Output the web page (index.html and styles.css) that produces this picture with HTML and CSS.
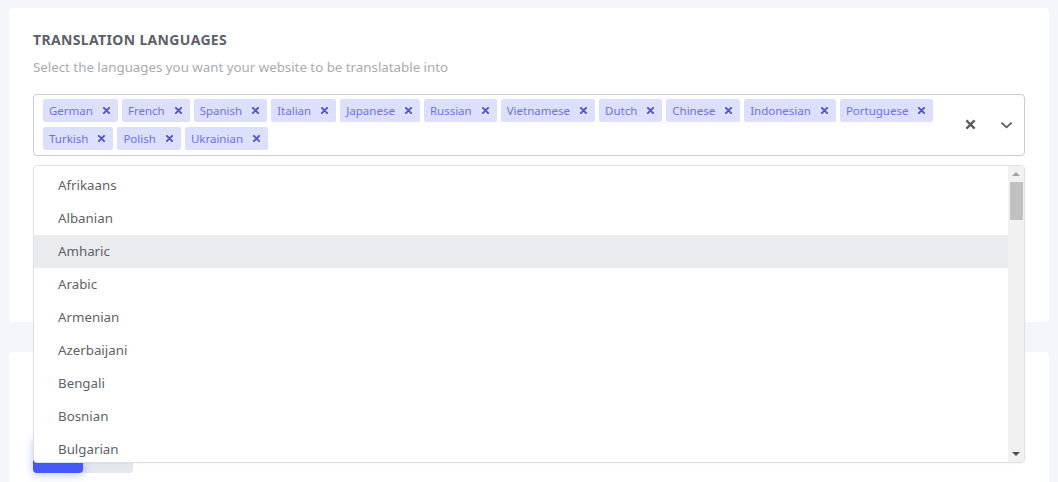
FILE: index.html
```html
<!DOCTYPE html>
<html lang="en">
<head>
<meta charset="utf-8">
<title>Translation languages</title>
<link rel="stylesheet" href="styles.css">
</head>
<body>
<div class="page">
  <section class="card card-languages">
    <h2 class="card-title">Translation languages</h2>
    <p class="card-subtitle">Select the languages you want your website to be translatable into</p>
    <div class="select">
      <div class="select-control">
        <div class="select-values">
          <span class="tag"><span class="tag-label">German</span><span class="tag-remove"><svg viewBox="0 0 8 8"><path d="M1 1L7 7M7 1L1 7"/></svg></span></span>
          <span class="tag"><span class="tag-label">French</span><span class="tag-remove"><svg viewBox="0 0 8 8"><path d="M1 1L7 7M7 1L1 7"/></svg></span></span>
          <span class="tag"><span class="tag-label">Spanish</span><span class="tag-remove"><svg viewBox="0 0 8 8"><path d="M1 1L7 7M7 1L1 7"/></svg></span></span>
          <span class="tag"><span class="tag-label">Italian</span><span class="tag-remove"><svg viewBox="0 0 8 8"><path d="M1 1L7 7M7 1L1 7"/></svg></span></span>
          <span class="tag"><span class="tag-label">Japanese</span><span class="tag-remove"><svg viewBox="0 0 8 8"><path d="M1 1L7 7M7 1L1 7"/></svg></span></span>
          <span class="tag"><span class="tag-label">Russian</span><span class="tag-remove"><svg viewBox="0 0 8 8"><path d="M1 1L7 7M7 1L1 7"/></svg></span></span>
          <span class="tag"><span class="tag-label">Vietnamese</span><span class="tag-remove"><svg viewBox="0 0 8 8"><path d="M1 1L7 7M7 1L1 7"/></svg></span></span>
          <span class="tag"><span class="tag-label">Dutch</span><span class="tag-remove"><svg viewBox="0 0 8 8"><path d="M1 1L7 7M7 1L1 7"/></svg></span></span>
          <span class="tag"><span class="tag-label">Chinese</span><span class="tag-remove"><svg viewBox="0 0 8 8"><path d="M1 1L7 7M7 1L1 7"/></svg></span></span>
          <span class="tag"><span class="tag-label">Indonesian</span><span class="tag-remove"><svg viewBox="0 0 8 8"><path d="M1 1L7 7M7 1L1 7"/></svg></span></span>
          <span class="tag"><span class="tag-label">Portuguese</span><span class="tag-remove"><svg viewBox="0 0 8 8"><path d="M1 1L7 7M7 1L1 7"/></svg></span></span>
          <span class="tag"><span class="tag-label">Turkish</span><span class="tag-remove"><svg viewBox="0 0 8 8"><path d="M1 1L7 7M7 1L1 7"/></svg></span></span>
          <span class="tag"><span class="tag-label">Polish</span><span class="tag-remove"><svg viewBox="0 0 8 8"><path d="M1 1L7 7M7 1L1 7"/></svg></span></span>
          <span class="tag"><span class="tag-label">Ukrainian</span><span class="tag-remove"><svg viewBox="0 0 8 8"><path d="M1 1L7 7M7 1L1 7"/></svg></span></span>
        </div>
        <div class="select-indicators">
          <span class="indicator"><svg class="icon-clear" viewBox="0 0 12 12"><path d="M1.5 1.5L10.5 10.5M10.5 1.5L1.5 10.5"/></svg></span>
          <span class="indicator"><svg class="icon-chevron" viewBox="0 0 14 8"><path d="M1.5 1.5L7 6.5L12.5 1.5"/></svg></span>
        </div>
      </div>
      <div class="select-menu">
        <ul class="menu-list">
          <li class="option">Afrikaans</li>
          <li class="option">Albanian</li>
          <li class="option option-focused">Amharic</li>
          <li class="option">Arabic</li>
          <li class="option">Armenian</li>
          <li class="option">Azerbaijani</li>
          <li class="option">Bengali</li>
          <li class="option">Bosnian</li>
          <li class="option">Bulgarian</li>
          <li class="option">Catalan</li>
          <li class="option">Cebuano</li>
          <li class="option">Croatian</li>
          <li class="option">Czech</li>
          <li class="option">Danish</li>
          <li class="option">Estonian</li>
          <li class="option">Filipino</li>
          <li class="option">Finnish</li>
          <li class="option">Georgian</li>
          <li class="option">Greek</li>
          <li class="option">Gujarati</li>
          <li class="option">Hebrew</li>
          <li class="option">Hindi</li>
          <li class="option">Hungarian</li>
          <li class="option">Icelandic</li>
          <li class="option">Irish</li>
          <li class="option">Javanese</li>
          <li class="option">Kannada</li>
          <li class="option">Kazakh</li>
          <li class="option">Khmer</li>
          <li class="option">Korean</li>
          <li class="option">Lao</li>
          <li class="option">Latvian</li>
          <li class="option">Lithuanian</li>
          <li class="option">Macedonian</li>
          <li class="option">Malay</li>
          <li class="option">Malayalam</li>
          <li class="option">Maltese</li>
          <li class="option">Marathi</li>
          <li class="option">Mongolian</li>
          <li class="option">Nepali</li>
          <li class="option">Norwegian</li>
          <li class="option">Persian</li>
          <li class="option">Punjabi</li>
          <li class="option">Romanian</li>
          <li class="option">Serbian</li>
          <li class="option">Sinhala</li>
          <li class="option">Slovak</li>
          <li class="option">Slovenian</li>
          <li class="option">Somali</li>
          <li class="option">Swahili</li>
          <li class="option">Swedish</li>
          <li class="option">Tamil</li>
          <li class="option">Telugu</li>
          <li class="option">Thai</li>
          <li class="option">Urdu</li>
          <li class="option">Uzbek</li>
          <li class="option">Welsh</li>
          <li class="option">Xhosa</li>
          <li class="option">Yoruba</li>
          <li class="option">Zulu</li>
        </ul>
        <div class="scrollbar">
          <span class="scroll-btn"><span class="arrow-up"></span></span>
          <span class="scroll-track"><span class="scroll-thumb"></span></span>
          <span class="scroll-btn"><span class="arrow-down"></span></span>
        </div>
      </div>
    </div>
  </section>
  <section class="card card-mode">
    <div class="segmented">
      <span class="segment segment-active"></span>
      <span class="segment"></span>
    </div>
  </section>
</div>
</body>
</html>
```

FILE: styles.css
```css
* { box-sizing: border-box; }

html, body {
  margin: 0;
  padding: 0;
}

body {
  background: #f4f5fa;
  font-family: "Noto Sans", "Open Sans", sans-serif;
  color: #5f6268;
  overflow: hidden;
}

.page {
  padding: 8px 9px 0 9px;
}

.card {
  background: #ffffff;
  border-radius: 4px;
  padding: 22px 24px 24px;
}

.card-languages {
  min-height: 314px;
}

.card-mode {
  margin-top: 30px;
  padding-top: 85px;
  min-height: 140px;
}

.card-title {
  margin: 0;
  font-size: 14px;
  line-height: 20px;
  font-weight: 700;
  letter-spacing: 0.35px;
  text-transform: uppercase;
  color: #5d616b;
}

.card-subtitle {
  margin: 7px 0 0;
  font-size: 13.3px;
  line-height: 20px;
  color: #a9abb1;
}

.select {
  position: relative;
  margin-top: 17px;
}

.select-control {
  display: flex;
  align-items: center;
  border: 1px solid #c9cdd3;
  border-radius: 4px;
  padding: 4px 0 5px 9px;
  background: #fff;
}

.select-values {
  flex: 1;
  display: flex;
  flex-wrap: wrap;
  gap: 5px 4px;
}

.tag {
  display: inline-flex;
  align-items: center;
  height: 23px;
  background: #dde0fd;
  border-radius: 2px;
  padding: 0 8px 0 6px;
}

.tag-label {
  font-size: 11.5px;
  color: #6e70ee;
}

.tag-remove {
  display: inline-flex;
  margin-left: 10px;
}

.tag-remove svg {
  width: 7px;
  height: 7px;
  fill: none;
  stroke: #4b4fd3;
  stroke-width: 2.1;
  stroke-linecap: round;
}

.select-indicators {
  display: flex;
  align-self: stretch;
  align-items: center;
}

.indicator {
  width: 36px;
  display: flex;
  justify-content: center;
  align-items: center;
}

.icon-clear {
  width: 11px;
  height: 11px;
  fill: none;
  stroke: #5a5a5a;
  stroke-width: 2.4;
}

.icon-chevron {
  width: 13px;
  height: 8px;
  fill: none;
  stroke: #5a5a5a;
  stroke-width: 2;
}

.select-menu {
  position: absolute;
  top: calc(100% + 9px);
  left: 0;
  right: 0;
  height: 298px;
  display: flex;
  background: #fff;
  border: 1px solid #dde1e6;
  border-radius: 4px;
  overflow: hidden;
  z-index: 10;
  box-shadow: 0 1px 2px rgba(0, 0, 0, 0.04);
}

.menu-list {
  flex: 1;
  margin: 0;
  padding: 3px 0 0;
  list-style: none;
  overflow: hidden;
}

.option {
  height: 33px;
  line-height: 33px;
  padding: 0 24px;
  font-size: 13.3px;
  color: #5f6268;
}

.option-focused {
  background: #e9ebee;
}

.scrollbar {
  width: 16px;
  display: flex;
  flex-direction: column;
  background: #f1f1f1;
}

.scroll-btn {
  height: 16px;
  display: flex;
  justify-content: center;
  align-items: center;
}

.arrow-up {
  width: 0;
  height: 0;
  border-left: 4px solid transparent;
  border-right: 4px solid transparent;
  border-bottom: 4px solid #a3a3a3;
}

.arrow-down {
  width: 0;
  height: 0;
  border-left: 4px solid transparent;
  border-right: 4px solid transparent;
  border-top: 4px solid #505050;
}

.scroll-track {
  flex: 1;
  padding: 0 1px 0 2px;
}

.scroll-thumb {
  display: block;
  height: 38px;
  background: #c1c1c1;
}

.segmented {
  display: flex;
  width: 100px;
  height: 36px;
  border-radius: 4px;
  background: #e3e7ee;
}

.segment {
  flex: 1;
  border-radius: 4px;
}

.segment-active {
  background: #4458f5;
  box-shadow: 0 2px 10px rgba(68, 88, 245, 0.35);
}
```
